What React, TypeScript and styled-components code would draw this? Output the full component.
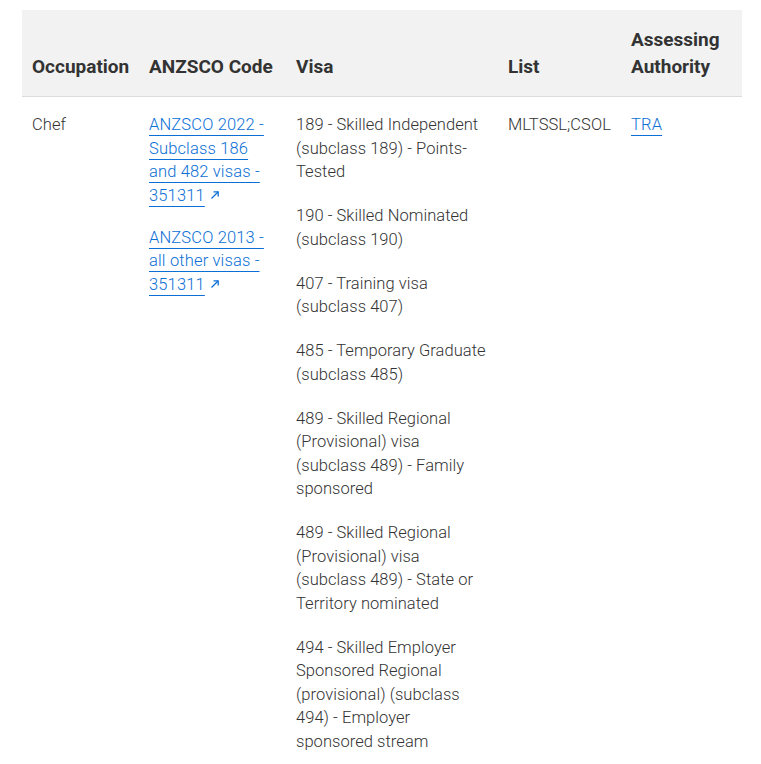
import React from "react";
import styled, { createGlobalStyle } from "styled-components";

const Global = createGlobalStyle`
  html, body { margin: 0; padding: 0; background: #fff; }
  body { font-family: Roboto, "Liberation Sans", Arial, sans-serif; color: #333; }
`;

const Page = styled.div`
  padding: 10px 19px 0 22px;
`;

const Table = styled.table`
  width: 720px;
  border-collapse: collapse;
  table-layout: fixed;
`;

const Th = styled.th`
  background: #f2f2f2;
  border-bottom: 1px solid #dcdcdc;
  padding: 16px 10px 16px;
  text-align: left;
  vertical-align: bottom;
  font-size: 19px;
  line-height: 27px;
  font-weight: 700;
  color: #333;
`;

const Td = styled.td`
  padding: 16px 10px 0;
  vertical-align: top;
  font-size: 16.5px;
  line-height: 23.5px;
  font-weight: 300;
  letter-spacing: 0.05px;
  color: #333;
`;

const Para = styled.p<{ $gap?: number }>`
  margin: 0 0 ${(p) => p.$gap ?? 20.5}px;
  &:last-child { margin-bottom: 0; }
`;

const Link = styled.a`
  color: #0b6fd6;
  text-decoration: underline;
  text-decoration-thickness: 1px;
  text-underline-offset: 5px;
  font-weight: 300;
  letter-spacing: 0.15px;
`;

const Arrow = styled.svg`
  width: 10px;
  height: 10px;
  margin-left: 5px;
  vertical-align: 1px;
`;

const ExtIcon = () => (
  <Arrow viewBox="0 0 10 10" fill="none" stroke="#0b6fd6" strokeWidth="1.3">
    <path d="M1.5 8.5 L8 2" />
    <path d="M3.5 1.8 H8.2 V6.5" />
  </Arrow>
);

const visas = [
  "189 - Skilled Independent (subclass 189) - Points-Tested",
  "190 - Skilled Nominated (subclass 190)",
  "407 - Training visa (subclass 407)",
  "485 - Temporary Graduate (subclass 485)",
  "489 - Skilled Regional (Provisional) visa (subclass 489) - Family sponsored",
  "489 - Skilled Regional (Provisional) visa (subclass 489) - State or Territory nominated",
  "494 - Skilled Employer Sponsored Regional (provisional) (subclass 494) - Employer sponsored stream",
];

export default function App() {
  return (
    <>
      <Global />
      <Page>
        <Table>
          <colgroup>
            <col style={{ width: 117 }} />
            <col style={{ width: 147 }} />
            <col style={{ width: 212 }} />
            <col style={{ width: 123 }} />
            <col style={{ width: 121 }} />
          </colgroup>
          <thead>
            <tr>
              <Th>Occupation</Th>
              <Th>ANZSCO Code</Th>
              <Th>Visa</Th>
              <Th>List</Th>
              <Th>Assessing Authority</Th>
            </tr>
          </thead>
          <tbody>
            <tr>
              <Td>Chef</Td>
              <Td>
                <Para $gap={18.5}>
                  <Link href="#">
                    ANZSCO 2022 - Subclass 186 and 482 visas - 351311
                    <ExtIcon />
                  </Link>
                </Para>
                <Para>
                  <Link href="#">
                    ANZSCO 2013 - all other visas - 351311
                    <ExtIcon />
                  </Link>
                </Para>
              </Td>
              <Td>
                {visas.map((v, i) => (
                  <Para key={i}>{v}</Para>
                ))}
              </Td>
              <Td>MLTSSL;CSOL</Td>
              <Td>
                <Link href="#">TRA</Link>
              </Td>
            </tr>
          </tbody>
        </Table>
      </Page>
    </>
  );
}
